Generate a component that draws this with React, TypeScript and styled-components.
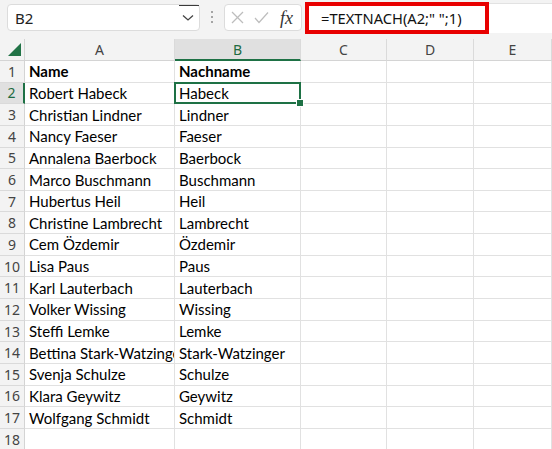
import React from "react";
import styled, { createGlobalStyle } from "styled-components";

const Global = createGlobalStyle`
  html, body { margin: 0; padding: 0; background: #ffffff; overflow: hidden; }
  body { width: 552px; height: 449px; }
`;

const Page = styled.div`
  width: 552px;
  height: 449px;
  overflow: hidden;
  background: #ffffff;
  font-family: "Lato", "Noto Sans", sans-serif;
`;

const Toolbar = styled.div`
  height: 39px;
  background: #f3f3f3;
  display: flex;
  align-items: flex-start;
  box-sizing: border-box;
`;

const NameBox = styled.div`
  position: relative;
  margin: 4px 0 0 7px;
  width: 193px;
  height: 27px;
  box-sizing: border-box;
  background: #ffffff;
  border: 1px solid #dcdcdc;
  border-radius: 4px;
  display: flex;
  align-items: center;
  justify-content: space-between;
  padding: 0 5px 0 7px;
  font-family: "Noto Sans", "Open Sans", sans-serif;
  font-size: 15px;
  color: #222;
`;

const NameTick = styled.span`
  position: absolute;
  top: 0;
  right: 0;
  width: 20px;
  height: 1px;
  background: #3a3a3a;
`;

const Dots = styled.div`
  width: 24px;
  display: flex;
  flex-direction: column;
  align-items: center;
  gap: 3px;
  margin-top: 11px;
  & > span {
    width: 2px;
    height: 2px;
    background: #8a8a8a;
    border-radius: 1px;
  }
`;

const FuncBox = styled.div`
  margin-top: 4px;
  width: 78px;
  height: 27px;
  box-sizing: border-box;
  background: #ffffff;
  border: 1px solid #dcdcdc;
  border-radius: 4px;
  display: flex;
  align-items: center;
  padding: 0 0 0 6px;
  gap: 10px;
`;

const Fx = styled.span`
  font-family: "Liberation Serif", serif;
  font-style: italic;
  font-size: 18px;
  color: #333;
  margin-left: 1px;
  line-height: 1;
`;

const FormulaArea = styled.div`
  flex: 1;
  margin: 3px 0 0 3px;
  height: 30px;
  background: #ffffff;
  border-top: 1px solid #e2e2e2;
  box-sizing: border-box;
  position: relative;
`;

const Highlight = styled.div`
  position: absolute;
  left: 0;
  top: -2px;
  width: 184px;
  height: 32px;
  box-sizing: border-box;
  border: 4px solid #e80000;
  display: flex;
  align-items: center;
  padding-left: 12px;
  font-family: "Noto Sans", "Open Sans", sans-serif;
  font-size: 14.7px;
  color: #111;
  white-space: pre;
`;

const Grid = styled.div`
  display: grid;
  grid-template-columns: 25px 150px 126px 86px 87px 1fr;
  grid-template-rows: 22px repeat(18, 21.65px);
`;

const Corner = styled.div`
  background: #f3f3f3;
  border-right: 1px solid #d4d4d4;
  border-bottom: 1px solid #d4d4d4;
  box-sizing: border-box;
  position: relative;
  display: flex;
  align-items: flex-end;
  justify-content: flex-end;
  padding: 0 3px 4px 0;
`;

const ColHead = styled.div<{ $sel?: boolean }>`
  background: ${(p) => (p.$sel ? "#e0e0e0" : "#f3f3f3")};
  border-right: 1px solid #dadada;
  border-bottom: ${(p) => (p.$sel ? "2px solid #1e7145" : "1px solid #d4d4d4")};
  box-sizing: border-box;
  display: flex;
  align-items: center;
  justify-content: center;
  font-family: "Noto Sans", "Open Sans", sans-serif;
  font-size: 14px;
  color: ${(p) => (p.$sel ? "#1e6b42" : "#444")};
`;

const RowHead = styled.div<{ $sel?: boolean }>`
  background: ${(p) => (p.$sel ? "#e0e0e0" : "#f3f3f3")};
  border-right: ${(p) => (p.$sel ? "2px solid #1e7145" : "1px solid #d4d4d4")};
  border-bottom: 1px solid #dadada;
  box-sizing: border-box;
  display: flex;
  align-items: center;
  justify-content: center;
  font-family: "Noto Sans", "Open Sans", sans-serif;
  font-size: 14px;
  color: ${(p) => (p.$sel ? "#1e6b42" : "#444")};
`;

const Cell = styled.div<{ $bold?: boolean }>`
  position: relative;
  border-right: 1px solid #e1e1e1;
  border-bottom: 1px solid #e1e1e1;
  box-sizing: border-box;
  padding: 0 0 0 4px;
  display: flex;
  align-items: center;
  white-space: nowrap;
  overflow: hidden;
  font-size: 15px;
  font-weight: ${(p) => (p.$bold ? 700 : 400)};
  color: #000;
`;

const SelCell = styled(Cell)`
  overflow: visible;
  z-index: 2;
`;

const Selection = styled.div`
  position: absolute;
  left: -1px;
  top: -1px;
  right: -1px;
  bottom: -1px;
  border: 2px solid #1e7145;
  pointer-events: none;
`;

const Handle = styled.div`
  position: absolute;
  right: -4px;
  bottom: -4px;
  width: 6px;
  height: 6px;
  background: #1e7145;
  border: 1px solid #ffffff;
`;

const rows: [string, string][] = [
  ["Name", "Nachname"],
  ["Robert Habeck", "Habeck"],
  ["Christian Lindner", "Lindner"],
  ["Nancy Faeser", "Faeser"],
  ["Annalena Baerbock", "Baerbock"],
  ["Marco Buschmann", "Buschmann"],
  ["Hubertus Heil", "Heil"],
  ["Christine Lambrecht", "Lambrecht"],
  ["Cem Özdemir", "Özdemir"],
  ["Lisa Paus", "Paus"],
  ["Karl Lauterbach", "Lauterbach"],
  ["Volker Wissing", "Wissing"],
  ["Steffi Lemke", "Lemke"],
  ["Bettina Stark-Watzinger", "Stark-Watzinger"],
  ["Svenja Schulze", "Schulze"],
  ["Klara Geywitz", "Geywitz"],
  ["Wolfgang Schmidt", "Schmidt"],
  ["", ""],
];

export default function App() {
  return (
    <Page>
      <Global />
      <Toolbar>
        <NameBox>
          <span>B2</span>
          <svg width="12" height="8" viewBox="0 0 12 8">
            <polyline points="1,1.5 6,6 11,1.5" fill="none" stroke="#444" strokeWidth="1.3" />
          </svg>
          <NameTick />
        </NameBox>
        <Dots>
          <span />
          <span />
          <span />
        </Dots>
        <FuncBox>
          <svg width="13" height="13" viewBox="0 0 13 13">
            <line x1="1" y1="1" x2="12" y2="12" stroke="#bdbdbd" strokeWidth="1.2" />
            <line x1="12" y1="1" x2="1" y2="12" stroke="#bdbdbd" strokeWidth="1.2" />
          </svg>
          <svg width="15" height="13" viewBox="0 0 15 13">
            <polyline points="1,7 5,11.5 14,1.5" fill="none" stroke="#bdbdbd" strokeWidth="1.2" />
          </svg>
          <Fx>fx</Fx>
        </FuncBox>
        <FormulaArea>
          <Highlight>{'=TEXTNACH(A2;" ";1)'}</Highlight>
        </FormulaArea>
      </Toolbar>
      <Grid>
        <Corner>
          <svg width="13" height="13" viewBox="0 0 13 13">
            <polygon points="13,0 13,13 0,13" fill="#217346" />
          </svg>
        </Corner>
        <ColHead>A</ColHead>
        <ColHead $sel>B</ColHead>
        <ColHead>C</ColHead>
        <ColHead>D</ColHead>
        <ColHead>E</ColHead>
        {rows.map(([a, b], i) => {
          const n = i + 1;
          const sel = n === 2;
          return (
            <React.Fragment key={n}>
              <RowHead $sel={sel}>{n}</RowHead>
              <Cell $bold={n === 1}>{a}</Cell>
              {sel ? (
                <SelCell>
                  {b}
                  <Selection />
                  <Handle />
                </SelCell>
              ) : (
                <Cell $bold={n === 1}>{b}</Cell>
              )}
              <Cell />
              <Cell />
              <Cell />
            </React.Fragment>
          );
        })}
      </Grid>
    </Page>
  );
}
